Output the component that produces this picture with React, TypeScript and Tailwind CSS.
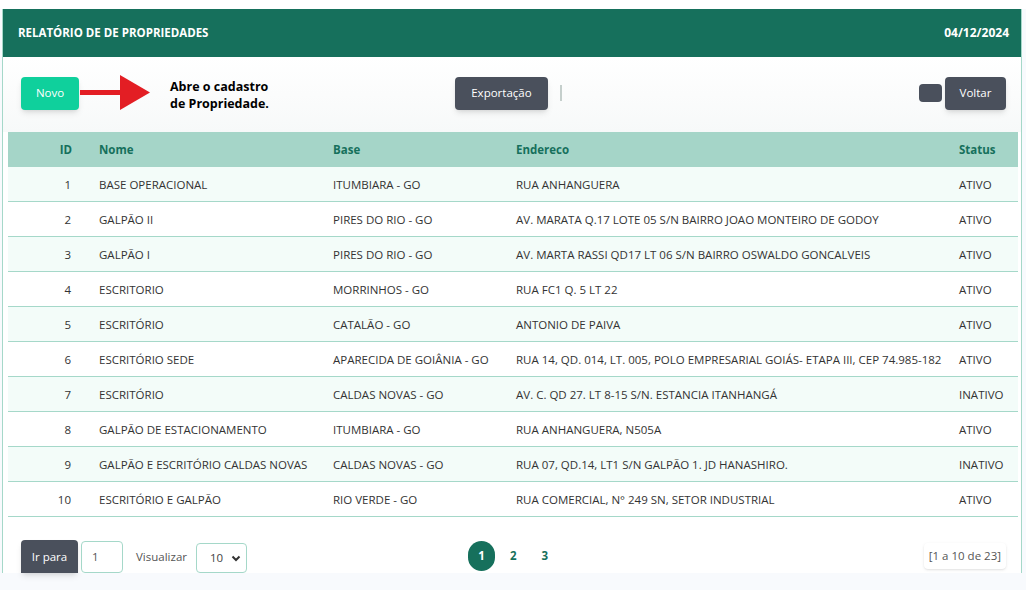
const rows = [
  { id: 1, nome: "BASE OPERACIONAL", base: "ITUMBIARA - GO", end: "RUA ANHANGUERA", status: "ATIVO" },
  { id: 2, nome: "GALPÃO II", base: "PIRES DO RIO - GO", end: "AV. MARATA Q.17 LOTE 05 S/N BAIRRO JOAO MONTEIRO DE GODOY", status: "ATIVO" },
  { id: 3, nome: "GALPÃO I", base: "PIRES DO RIO - GO", end: "AV. MARTA RASSI QD17 LT 06 S/N BAIRRO OSWALDO GONCALVEIS", status: "ATIVO" },
  { id: 4, nome: "ESCRITORIO", base: "MORRINHOS - GO", end: "RUA FC1 Q. 5 LT 22", status: "ATIVO" },
  { id: 5, nome: "ESCRITÓRIO", base: "CATALÃO - GO", end: "ANTONIO DE PAIVA", status: "ATIVO" },
  { id: 6, nome: "ESCRITÓRIO SEDE", base: "APARECIDA DE GOIÂNIA - GO", end: "RUA 14, QD. 014, LT. 005, POLO EMPRESARIAL GOIÁS- ETAPA III, CEP 74.985-182", status: "ATIVO" },
  { id: 7, nome: "ESCRITÓRIO", base: "CALDAS NOVAS - GO", end: "AV. C. QD 27. LT 8-15 S/N. ESTANCIA ITANHANGÁ", status: "INATIVO" },
  { id: 8, nome: "GALPÃO DE ESTACIONAMENTO", base: "ITUMBIARA - GO", end: "RUA ANHANGUERA, N505A", status: "ATIVO" },
  { id: 9, nome: "GALPÃO E ESCRITÓRIO CALDAS NOVAS", base: "CALDAS NOVAS - GO", end: "RUA 07, QD.14, LT1 S/N GALPÃO 1. JD HANASHIRO.", status: "INATIVO" },
  { id: 10, nome: "ESCRITÓRIO E GALPÃO", base: "RIO VERDE - GO", end: "RUA COMERCIAL, N° 249 SN, SETOR INDUSTRIAL", status: "ATIVO" },
];

const cols = "grid grid-cols-[78px_233px_183px_443px_1fr]";

export default function App() {
  return (
    <div className="w-[1026px] h-[590px] overflow-hidden bg-[#f8fafd] font-['Open_Sans',sans-serif]">
      <div className="h-[9px] bg-white" />
      <div className="ml-[2px] w-[1020px] h-[564px] bg-white border-x border-[#a5d8c9] flex flex-col">
        <div className="h-[48px] bg-[#16705c] flex items-center justify-between pl-[15px] pr-[12px] text-white font-bold">
          <span className="text-[11.5px]">RELATÓRIO DE DE PROPRIEDADES</span>
          <span className="text-[12px]">04/12/2024</span>
        </div>

        <div className="h-[75px] flex items-center pb-[3px] pl-[18px] pr-[15px] bg-gradient-to-b from-white to-[#f7f9f9]">
          <button className="w-[58px] h-[33px] rounded bg-[#0fd09c] text-white text-[11.5px] shadow-md">Novo</button>
          <Arrow />
          <div className="ml-[20px] mt-[4px] text-[12.5px] font-bold leading-[17px] text-black">
            Abre o cadastro
            <br />
            de Propriedade.
          </div>
          <button className="ml-[186px] w-[93px] h-[33px] rounded bg-[#4a505c] text-white text-[11.5px] shadow-md">Exportação</button>
          <div className="ml-[12px] w-[2px] h-[16px] bg-[#c5cfcc]" />
          <div className="ml-auto w-[23px] h-[18px] rounded bg-[#4a505c]" />
          <button className="ml-[3px] w-[61px] h-[33px] rounded bg-[#4a505c] text-white text-[11.5px] shadow-md">Voltar</button>
        </div>

        <div className="pl-[5px] pr-[3px] text-[11.5px]">
          <div className={`${cols} h-[35px] items-center pt-[1px] bg-[#a5d5c8] text-[#16705c] font-bold`}>
            <div className="text-right pr-[14px]">ID</div>
            <div className="pl-[13px]">Nome</div>
            <div className="pl-[14px]">Base</div>
            <div className="pl-[14px]">Endereco</div>
            <div className="pl-[14px]">Status</div>
          </div>
          {rows.map((r, i) => (
            <div
              key={r.id}
              className={`${cols} h-[35px] items-center pt-[2px] border-b border-[#a5d8c9] text-[#333] ${i % 2 === 0 ? "bg-[#f3fcf9]" : "bg-white"}`}
            >
              <div className="text-right pr-[15px]">{r.id}</div>
              <div className="pl-[13px] whitespace-nowrap">{r.nome}</div>
              <div className="pl-[14px] whitespace-nowrap">{r.base}</div>
              <div className="pl-[14px] whitespace-nowrap">{r.end}</div>
              <div className="pl-[14px]">{r.status}</div>
            </div>
          ))}
        </div>

        <div className="mt-[23px] flex items-end pl-[18px] pr-[15px] text-[11.5px]">
          <button className="w-[57px] h-[33px] rounded-t bg-[#4a505c] text-white shadow-md">Ir para</button>
          <div className="ml-[3px] w-[42px] h-[32px] rounded border border-[#a5d8c9] flex items-center pl-[10px] text-[#555]">1</div>
          <span className="ml-[13px] mb-[8px] text-[#555]">Visualizar</span>
          <div className="ml-[9px] w-[51px] h-[30px] rounded border border-[#a5d8c9] flex items-center justify-between pl-[13px] pr-[4px] text-[#444]">
            10
            <svg width="12" height="12" viewBox="0 0 12 12">
              <path d="M2.5 4.5 L6 8 L9.5 4.5" stroke="#333" strokeWidth="2" fill="none" />
            </svg>
          </div>
          <div className="ml-[221px] mb-[2px] flex items-center font-bold text-[#16705c]">
            <div className="w-[27px] h-[30px] rounded-full bg-[#16705c] text-white flex items-center justify-center">1</div>
            <span className="ml-[15px]">2</span>
            <span className="ml-[25px]">3</span>
          </div>
          <div className="ml-auto mb-[4px] h-[26px] px-[5px] flex items-center rounded bg-white shadow-sm text-[#555]">[1 a 10 de 23]</div>
        </div>
      </div>
    </div>
  );
}

function Arrow() {
  return (
    <svg width="70" height="36" viewBox="0 0 70 36" className="ml-[1px]">
      <rect x="0" y="15" width="42" height="5" fill="#e31e24" />
      <polygon points="40,0 70,17.5 40,35" fill="#e31e24" />
    </svg>
  );
}
